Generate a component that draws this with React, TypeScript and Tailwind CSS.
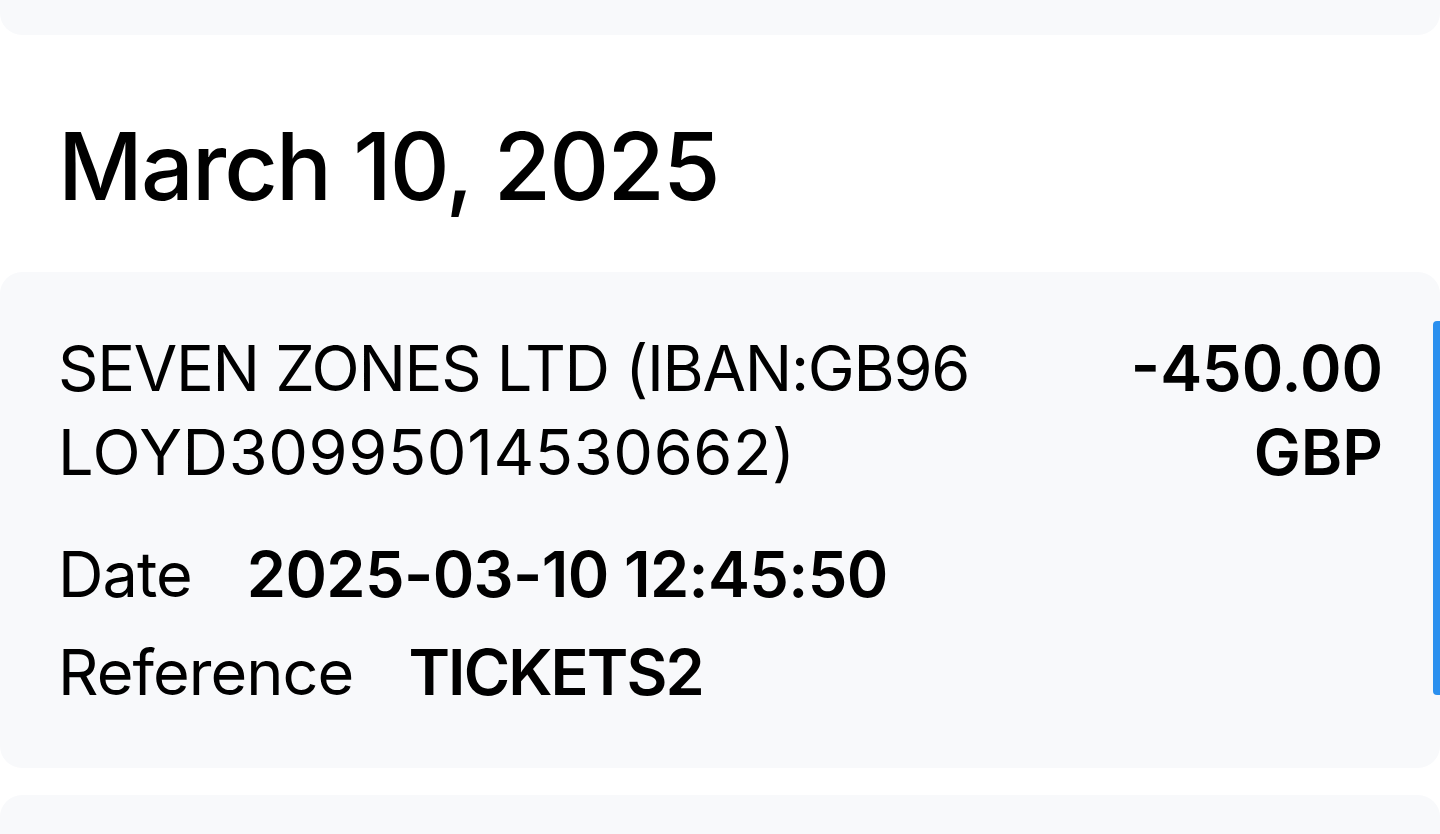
export default function App() {
  return (
    <div
      className="min-h-screen overflow-hidden bg-white text-black"
      style={{ fontFamily: "Inter, 'Noto Sans', sans-serif" }}
    >
      <div className="h-[35px] rounded-b-[22px] bg-[#f8f9fb]" />

      <h2 className="mt-[73px] px-[58px] text-[93px] font-medium leading-[116px] tracking-[-0.02em]">
        March 10, 2025
      </h2>

      <div className="relative mt-[48px] rounded-[22px] bg-[#f8f9fb] pb-[47px] pl-[58px] pr-[57px] pt-[54px]">
        <div className="flex justify-between gap-10">
          <p className="max-w-[960px] text-[63px] leading-[84px] tracking-[-0.02em]">
            SEVEN ZONES LTD (IBAN:GB96{" "}
            <span className="tracking-[0.01em]">LOYD30995014530662)</span>
          </p>
          <p className="w-[280px] text-right text-[63px] font-semibold leading-[84px]">
            -450.00 GBP
          </p>
        </div>

        <div className="mt-[31px] flex items-baseline gap-[55px] text-[63px] leading-[98px]">
          <span className="tracking-[-0.015em]">Date</span>
          <span className="font-semibold tracking-[-0.01em]">2025-03-10 12:45:50</span>
        </div>
        <div className="flex items-baseline gap-[55px] text-[63px] leading-[98px]">
          <span className="tracking-[-0.015em]">Reference</span>
          <span className="font-semibold tracking-[-0.03em]">TICKETS2</span>
        </div>

        <div className="absolute right-0 top-[49px] h-[374px] w-[7px] rounded-l-[4px] bg-[#2b90ef]" />
      </div>

      <div className="mt-[27px] h-[200px] rounded-[22px] bg-[#f8f9fb]" />
    </div>
  );
}
